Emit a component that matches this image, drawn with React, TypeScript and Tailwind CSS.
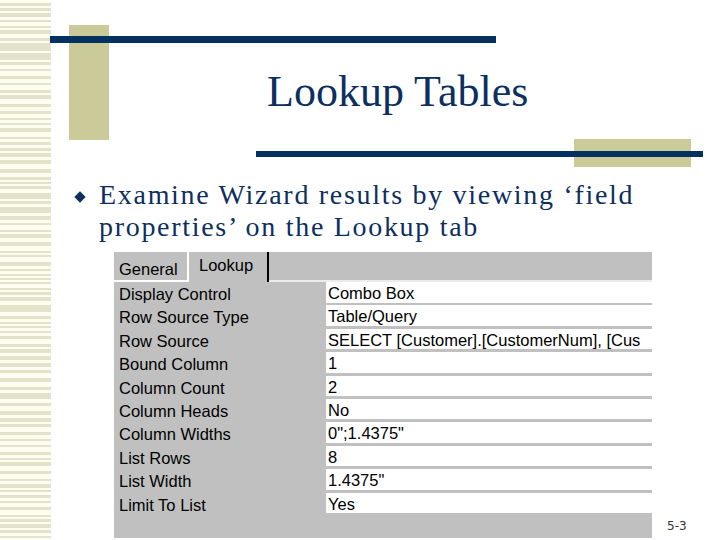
import React from 'react';

// left edge decoration: irregular beige stripes on cream
const stripes: { gap: number; h: number }[] = (() => {
  let seed = 7;
  const rnd = () => {
    seed = (seed * 9301 + 49297) % 233280;
    return seed / 233280;
  };
  const out: { gap: number; h: number }[] = [];
  let y = 0;
  while (y < 540) {
    const gap = 2 + Math.floor(rnd() * 4);
    const h = 2 + Math.floor(rnd() * 3) + (rnd() > 0.9 ? 4 : 0);
    out.push({ gap, h });
    y += gap + h;
  }
  return out;
})();

const rows: [string, string][] = [
  ['Display Control', 'Combo Box'],
  ['Row Source Type', 'Table/Query'],
  ['Row Source', 'SELECT [Customer].[CustomerNum], [Cus'],
  ['Bound Column', '1'],
  ['Column Count', '2'],
  ['Column Heads', 'No'],
  ['Column Widths', '0";1.4375"'],
  ['List Rows', '8'],
  ['List Width', '1.4375"'],
  ['Limit To List', 'Yes'],
];

const sheetFont = { fontFamily: '"Liberation Sans", Arial, sans-serif' };

function PropertySheet() {
  return (
    <div className="w-[538px] h-[286px] bg-[#c0c0c0] text-[16.5px] text-black" style={sheetFont}>
      <div className="flex h-[30px]">
        <div className="w-[73px] h-full border-b-2 border-white pl-[5px] pt-[8px] leading-[18px]">General</div>
        <div className="w-[82px] h-full border-l-2 border-white border-r-2 border-r-black pl-[10px] pt-[4px] leading-[18px]">
          Lookup
        </div>
        <div className="flex-1 h-full border-b-2 border-[#ececec]" />
      </div>
      <div className="flex flex-col">
        {rows.map(([label, value]) => (
          <div key={label} className="flex h-[23.4px]">
            <div className="w-[212px] pl-[5px] pt-[3px] leading-[18px] whitespace-nowrap">{label}</div>
            <div className="flex-1 h-[20.5px] bg-white overflow-hidden">
              <div className="pl-[2px] pt-[2px] leading-[18px] whitespace-nowrap">{value}</div>
            </div>
          </div>
        ))}
      </div>
    </div>
  );
}

export default function App() {
  return (
    <div className="w-[720px] h-[540px] bg-white flex overflow-hidden">
      <div className="w-[51px] shrink-0 h-full bg-[#fdfdf0] flex flex-col">
        {stripes.map((s, i) => (
          <div key={i} className="shrink-0 bg-[#e3e3cc]" style={{ marginTop: s.gap, height: s.h }} />
        ))}
      </div>

      <main className="flex-1 flex flex-col">
        <header className="relative h-[170px]">
          <div className="absolute left-[18px] top-[25px] w-[40px] h-[115px] bg-[#cbcb9a]" />
          <div className="absolute left-[-1px] top-[36px] w-[446px] h-[7px] bg-[#04315f]" />
          <div className="absolute left-[523px] top-[139px] w-[117px] h-[28px] bg-[#cbcb9a]" />
          <div className="absolute left-[205px] top-[151px] w-[447px] h-[6px] bg-[#04315f]" />
          <h1
            className="relative pl-[216px] pt-[70px] text-[44px] leading-none text-[#0b2f5f]"
            style={{ fontFamily: '"Liberation Serif", "Times New Roman", serif' }}
          >
            Lookup Tables
          </h1>
        </header>

        <div
          className="flex mt-[9px] text-[28px] leading-[32px] tracking-[1.7px] text-[#0d2f5e]"
          style={{ fontFamily: '"Liberation Serif", "Times New Roman", serif' }}
        >
          <div className="w-[48px] shrink-0">
            <div className="ml-[25px] mt-[14px] w-[8px] h-[8px] rotate-45 bg-[#0d2f5e]" />
          </div>
          <p>
            Examine Wizard results by viewing ‘field
            <br />
            properties’ on the Lookup tab
          </p>
        </div>

        <div className="flex items-end mt-[9px]">
          <div className="ml-[63px]">
            <PropertySheet />
          </div>
          <div
            className="ml-[15px] pb-[6px] text-[12px] leading-none text-[#333]"
            style={{ fontFamily: '"DejaVu Sans", sans-serif' }}
          >
            5-3
          </div>
        </div>
      </main>
    </div>
  );
}
